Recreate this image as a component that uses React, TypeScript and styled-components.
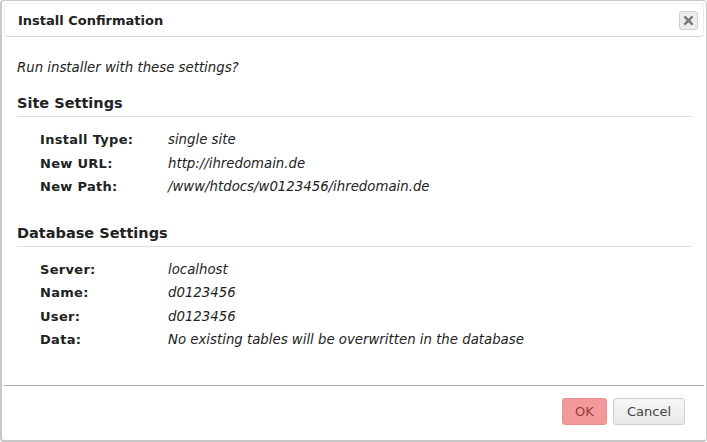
import React from "react";
import styled, { createGlobalStyle } from "styled-components";

const Global = createGlobalStyle`
  html, body { margin: 0; padding: 0; background: #fff; }
  body { font-family: "DejaVu Sans", Verdana, sans-serif; color: #222; }
`;

const Dialog = styled.div`
  box-sizing: border-box;
  width: 707px;
  height: 442px;
  border: 1px solid #c8c8c8;
  border-left-width: 2px;
  border-bottom-width: 2px;
  border-radius: 4px;
  padding: 2px 2px 0 2px;
  display: flex;
  flex-direction: column;
  background: #fff;
`;

const TitleBar = styled.div`
  height: 34px;
  box-sizing: border-box;
  border: 1px solid #ececec;
  border-bottom-color: #d6d6d6;
  border-radius: 4px;
  display: flex;
  align-items: center;
  justify-content: space-between;
  padding: 0 5px 0 13px;
`;

const Title = styled.span`
  font-weight: bold;
  font-size: 13px;
  color: #222;
`;

const CloseButton = styled.button`
  width: 19px;
  height: 19px;
  padding: 0;
  border: 1px solid #d0d0d0;
  border-radius: 3px;
  background: #ececec;
  display: flex;
  align-items: center;
  justify-content: center;
`;

const Body = styled.div`
  flex: 1;
  padding: 23px 13px 0 13px;
`;

const Intro = styled.p`
  margin: 0 0 20px 0;
  font-style: italic;
  font-size: 13.3px;
  color: #222;
`;

const SectionTitle = styled.h3`
  margin: 0;
  font-size: 14.5px;
  font-weight: bold;
  color: #222;
  padding-bottom: 5px;
  border-bottom: 1px solid #dedede;
`;

const Table = styled.div<{ $gapAfter?: number }>`
  display: grid;
  grid-template-columns: 128px 1fr;
  grid-auto-rows: 23.5px;
  padding: 15px 0 0 23px;
  margin-bottom: ${(p) => p.$gapAfter ?? 0}px;
`;

const Label = styled.span`
  font-weight: bold;
  font-size: 13px;
  letter-spacing: 0.3px;
  color: #222;
`;

const Value = styled.span`
  font-style: italic;
  font-size: 13.3px;
  color: #222;
`;

const Footer = styled.div`
  box-sizing: border-box;
  height: 55px;
  border-top: 1px solid #ababab;
  display: flex;
  justify-content: flex-end;
  align-items: center;
  gap: 6px;
  padding: 0 19px 4px 0;
`;

const Button = styled.button<{ $primary?: boolean }>`
  height: 27px;
  width: ${(p) => (p.$primary ? 45 : 72)}px;
  font-family: "DejaVu Sans", Verdana, sans-serif;
  font-size: 13px;
  border-radius: 3px;
  padding: 0;
  border: 1px solid ${(p) => (p.$primary ? "#e79090" : "#cfcfcf")};
  background: ${(p) =>
    p.$primary ? "#f29a9a" : "linear-gradient(#f6f6f6, #e8e8e8)"};
  color: ${(p) => (p.$primary ? "#9a3b3b" : "#444")};
`;

const siteRows = [
  ["Install Type:", "single site"],
  ["New URL:", "http://ihredomain.de"],
  ["New Path:", "/www/htdocs/w0123456/ihredomain.de"],
];

const dbRows = [
  ["Server:", "localhost"],
  ["Name:", "d0123456"],
  ["User:", "d0123456"],
  ["Data:", "No existing tables will be overwritten in the database"],
];

export default function App() {
  return (
    <>
      <Global />
      <Dialog>
        <TitleBar>
          <Title>Install Confirmation</Title>
          <CloseButton aria-label="close">
            <svg width="9" height="9" viewBox="0 0 9 9">
              <path d="M1.2 1.2 L7.8 7.8 M7.8 1.2 L1.2 7.8" stroke="#777" strokeWidth="2.4" strokeLinecap="square" />
            </svg>
          </CloseButton>
        </TitleBar>
        <Body>
          <Intro>Run installer with these settings?</Intro>
          <SectionTitle>Site Settings</SectionTitle>
          <Table $gapAfter={22}>
            {siteRows.map(([l, v]) => (
              <React.Fragment key={l}>
                <Label>{l}</Label>
                <Value>{v}</Value>
              </React.Fragment>
            ))}
          </Table>
          <SectionTitle>Database Settings</SectionTitle>
          <Table>
            {dbRows.map(([l, v]) => (
              <React.Fragment key={l}>
                <Label>{l}</Label>
                <Value>{v}</Value>
              </React.Fragment>
            ))}
          </Table>
        </Body>
        <Footer>
          <Button $primary>OK</Button>
          <Button>Cancel</Button>
        </Footer>
      </Dialog>
    </>
  );
}
